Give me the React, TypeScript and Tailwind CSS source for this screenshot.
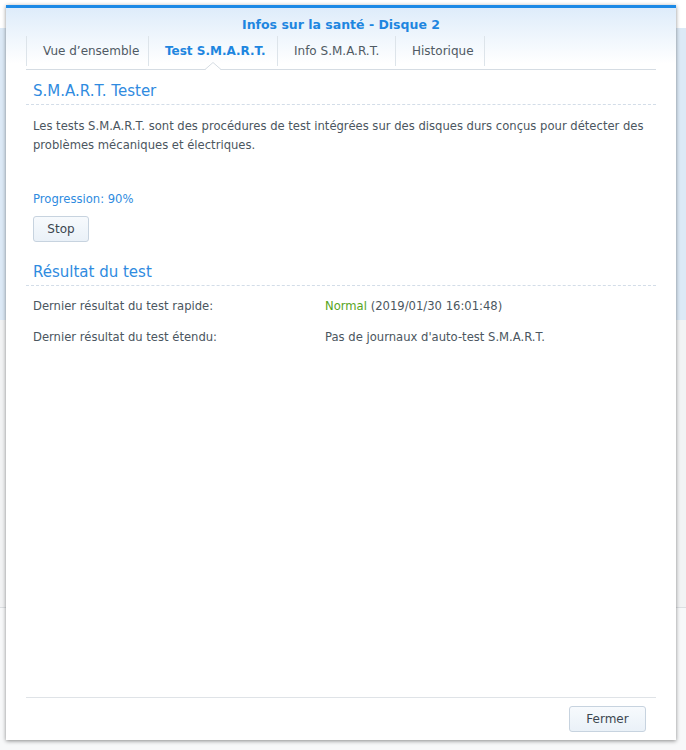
import React from "react";

const font = { fontFamily: '"DejaVu Sans", Verdana, sans-serif' };

const tabs = [
  { label: "Vue d\u2019ensemble", w: "w-[121px]" },
  { label: "Test S.M.A.R.T.", w: "w-[128px]", active: true },
  { label: "Info S.M.A.R.T.", w: "w-[117px]" },
  { label: "Historique", w: "w-[88px]" },
];

function SectionTitle({ children }: { children: React.ReactNode }) {
  return (
    <div className="border-b border-dashed border-[#d3dde8] px-[7px] pb-[3px] text-[15px] leading-[19px] text-[#2f8be0]">
      {children}
    </div>
  );
}

function Btn({ children, className = "" }: { children: React.ReactNode; className?: string }) {
  return (
    <button
      className={`h-[26px] rounded-[3px] border border-[#c7d3df] bg-gradient-to-b from-[#f7fafd] to-[#eaf1f8] text-[12px] text-[#3c4650] ${className}`}
    >
      {children}
    </button>
  );
}

export default function App() {
  return (
    <div className="relative h-[750px] w-[686px] overflow-hidden bg-white" style={font}>
      {/* page behind the dialog */}
      <div className="h-[28px] bg-white" />
      <div className="h-[292px] bg-[#dce9f6]" />
      <div className="h-[287px] bg-[#f2f3f4]" />
      <div className="h-[1px] bg-[#dcdfe2]" />
      <div className="h-[142px] bg-[#f7f8f9]" />

      {/* dialog */}
      <div className="absolute left-[6px] top-[5px] flex h-[735px] w-[670px] flex-col border-t-[3px] border-[#1d8ae6] bg-white shadow-[0_1px_4px_rgba(0,0,0,0.45)]">
        <div className="bg-gradient-to-b from-[#deecfa] to-white to-[90%] px-[20px]">
          <div className="pt-[9px] text-center text-[12.5px] font-bold leading-[16px] text-[#1e86e0]">
            Infos sur la santé - Disque 2
          </div>
          <div className="relative flex h-[37px] border-b border-[#d5dce3]">
            <div className="h-[30px] w-px self-center bg-[#dde4ea]" />
            {tabs.map((t) => (
              <div key={t.label} className="flex items-center">
                <div
                  className={`relative flex h-full items-center whitespace-nowrap pl-[16px] text-[12px] ${t.w} ${
                    t.active ? "font-bold text-[#1e86e0]" : "text-[#505a64]"
                  }`}
                >
                  {t.label}
                  {t.active && (
                    <svg
                      className="absolute bottom-[-1px] left-[56px]"
                      width="16"
                      height="8"
                      viewBox="0 0 16 8"
                    >
                      <path d="M0 8 L8 0.5 L16 8 Z" fill="white" />
                      <path d="M0 7.5 L8 0.5 L16 7.5" fill="none" stroke="#d5dce3" />
                    </svg>
                  )}
                </div>
                <div className="h-[30px] w-px bg-[#dde4ea]" />
              </div>
            ))}
          </div>
        </div>

        <div className="flex flex-1 flex-col px-[20px] pt-[12px] text-[11.6px] text-[#4b5660]">
          <SectionTitle>S.M.A.R.T. Tester</SectionTitle>
          <p className="px-[7px] pt-[12px] leading-[19px]">
            Les tests S.M.A.R.T. sont des procédures de test intégrées sur des disques durs conçus pour détecter des
            problèmes mécaniques et électriques.
          </p>
          <div className="px-[7px] pt-[36px] leading-[16px] text-[#2f8be0]">Progression: 90%</div>
          <div className="px-[7px] pt-[9px]">
            <Btn className="w-[56px]">Stop</Btn>
          </div>

          <div className="pt-[21px]">
            <SectionTitle>Résultat du test</SectionTitle>
          </div>
          <div className="flex flex-col gap-[15px] px-[7px] pt-[12px] leading-[16px]">
            <div className="flex">
              <span className="w-[292px]">Dernier résultat du test rapide:</span>
              <span>
                <span className="text-[#57a51c]">Normal</span> (2019/01/30 16:01:48)
              </span>
            </div>
            <div className="flex">
              <span className="w-[292px]">Dernier résultat du test étendu:</span>
              <span>Pas de journaux d'auto-test S.M.A.R.T.</span>
            </div>
          </div>

          <div className="mt-auto flex justify-end border-t border-[#dfe3e7] pt-[8px] pb-[8px] pr-[10px]">
            <Btn className="w-[77px]">Fermer</Btn>
          </div>
        </div>
      </div>
    </div>
  );
}
